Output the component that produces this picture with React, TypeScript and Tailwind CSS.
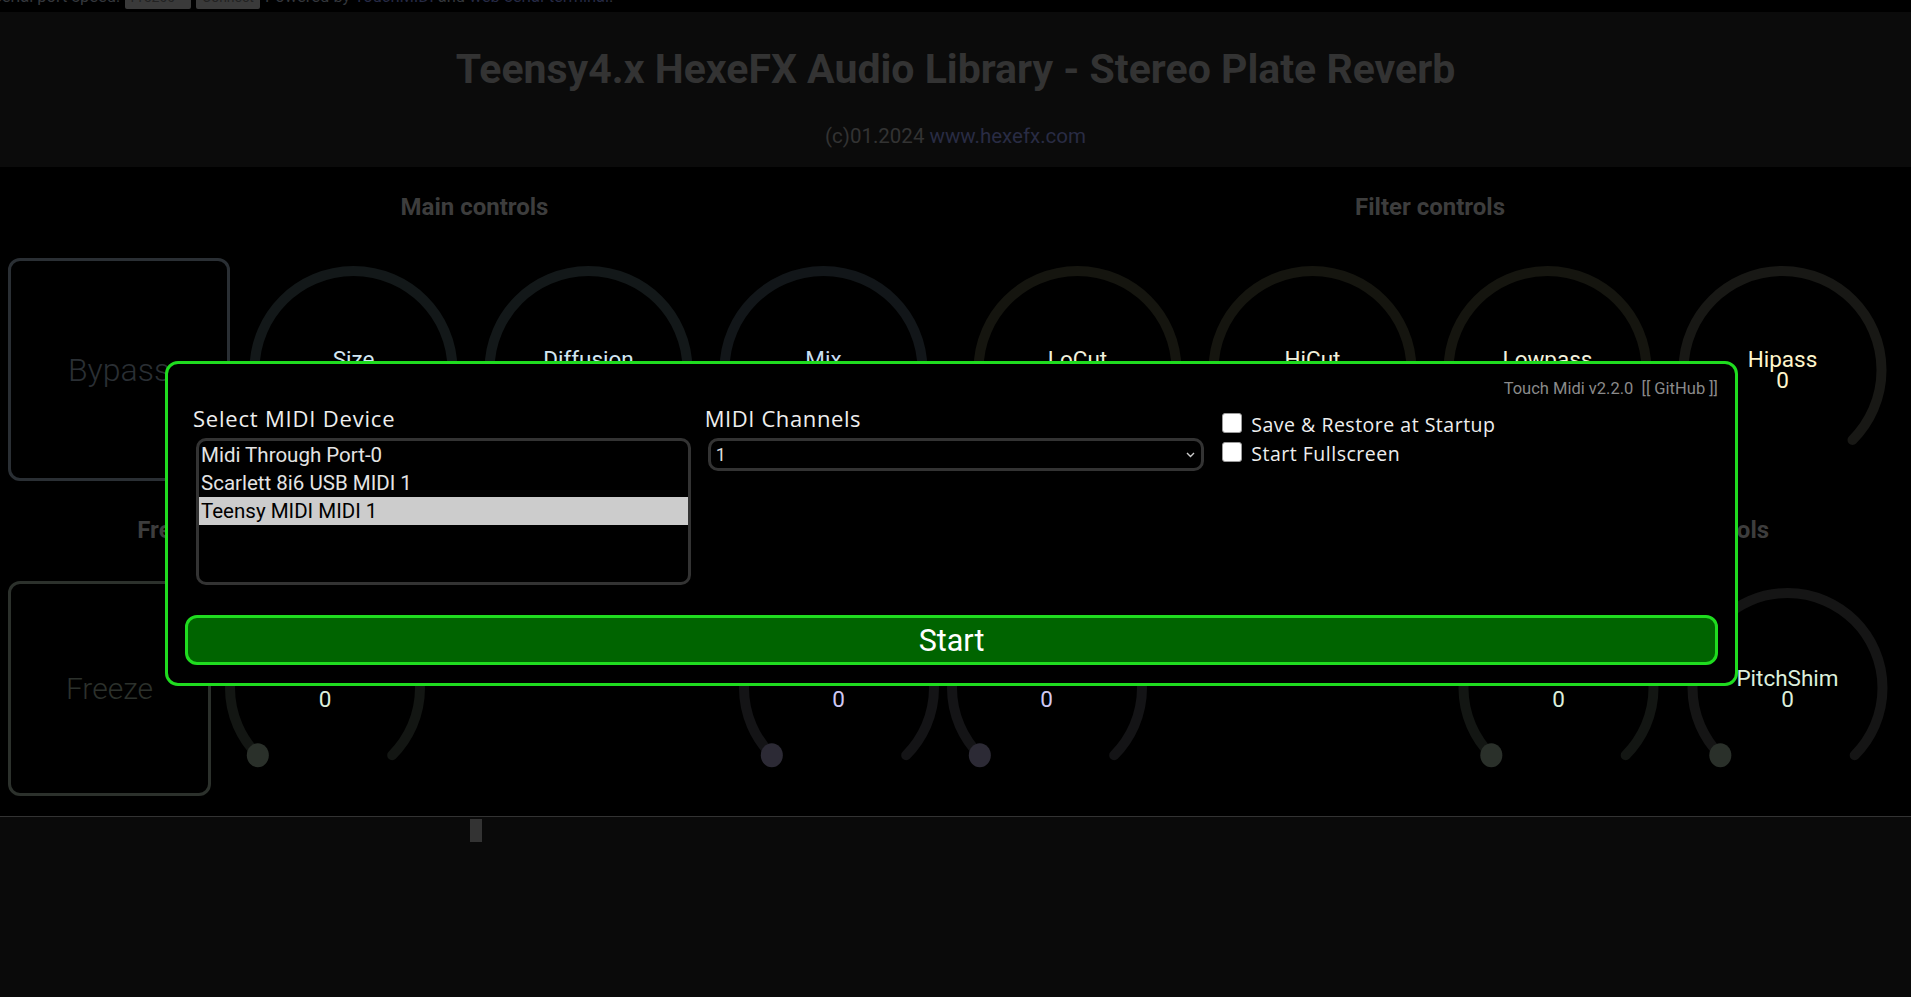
import React from "react";

interface KnobProps {
  label: string;
  w: number;
  h: number;
  r: number;
  cy: number;
  arc: string;
  dot: string;
  text: string;
}

function Knob({ label, w, h, r, cy, arc, dot, text }: KnobProps) {
  const cx = w / 2;
  const d = r * Math.SQRT1_2;
  const path = `M ${cx - d} ${cy + d} A ${r} ${r} 0 1 1 ${cx + d} ${cy + d}`;
  return (
    <div className="relative shrink-0" style={{ width: w, height: h }}>
      <svg width={w} height={h} viewBox={`0 0 ${w} ${h}`}>
        <path d={path} fill="none" stroke={arc} strokeWidth={10} strokeLinecap="round" />
        <ellipse cx={cx - d} cy={cy + d} rx={11} ry={12} fill={dot} />
      </svg>
      <div
        className="absolute inset-0 flex flex-col items-center justify-center text-[22.5px] leading-[21px]"
        style={{ color: text }}
      >
        <span>{label}</span>
        <span>0</span>
      </div>
    </div>
  );
}

function Heading({ children }: { children: React.ReactNode }) {
  return (
    <div className="h-[26px] text-[24px] font-bold leading-[26px] text-[#3d3d3d] whitespace-nowrap">
      {children}
    </div>
  );
}

const mainKnobs = [
  { label: "Size", arc: "#131819", dot: "#262c30", text: "#d2e6f2" },
  { label: "Diffusion", arc: "#131819", dot: "#262c30", text: "#d2e6f2" },
  { label: "Mix", arc: "#121619", dot: "#262c30", text: "#c8ddf2" },
];

const filterKnobs = [
  { label: "LoCut", arc: "#15150f", dot: "#2c2c24", text: "#f2f0dc" },
  { label: "HiCut", arc: "#15150f", dot: "#2c2c24", text: "#f2f0dc" },
  { label: "Lowpass", arc: "#15150f", dot: "#2c2c24", text: "#f2f0dc" },
  { label: "Hipass", arc: "#181815", dot: "#2c2c24", text: "#fff6cc" },
];

function Modal() {
  return (
    <div className="absolute left-[165px] top-[361px] z-10 w-[1573px] rounded-[13px] border-[3px] border-[#1fdc1f] bg-black px-[17px] pb-[18px] pt-[15px] font-['Roboto',sans-serif]">
      <div className="whitespace-pre text-right text-[16.5px] leading-[20px] text-[#8a8a8a]">
        Touch Midi v2.2.0  [[ GitHub ]]
      </div>

      <div className="mt-[6px] grid grid-cols-3 gap-x-[16px] pl-[8px]">
        {/* device list */}
        <div>
          <div className="font-['Open_Sans',sans-serif] text-[22px] leading-[26px] tracking-[0.8px] text-[#eeeeee]">
            Select MIDI Device
          </div>
          <div className="ml-[3px] mt-[7px] h-[147px] rounded-[10px] border-[3px] border-[#333333] text-[20.5px] leading-[28px] text-[#e4e4e4]">
            <div className="px-[2px]">Midi Through Port-0</div>
            <div className="px-[2px]">Scarlett 8i6 USB MIDI 1</div>
            <div className="bg-[#cccccc] px-[2px] text-black">Teensy MIDI MIDI 1</div>
          </div>
        </div>

        {/* channels */}
        <div>
          <div className="-ml-[2px] font-['Open_Sans',sans-serif] text-[22px] leading-[26px] tracking-[0.6px] text-[#eeeeee]">
            MIDI Channels
          </div>
          <div className="ml-[1px] mt-[7px] flex h-[33px] items-center justify-between rounded-[10px] border-[3px] border-[#333333] pl-[5px] pr-[6px] text-[18px] text-[#dddddd]">
            <span>1</span>
            <svg width="9" height="6" viewBox="0 0 9 6">
              <path d="M1 1 L4.5 4.5 L8 1" fill="none" stroke="#cccccc" strokeWidth="1.4" />
            </svg>
          </div>
        </div>

        {/* options */}
        <div className="pl-[2px] pt-[5px] font-['Open_Sans',sans-serif]">
          <label className="flex h-[29px] items-center gap-[9px] text-[19.5px] tracking-[0.5px] text-[#eeeeee]">
            <span className="-mt-[4px] h-[20px] w-[20px] rounded-[3px] border border-[#9a9a9a] bg-white" />
            Save &amp; Restore at Startup
          </label>
          <label className="flex h-[29px] items-center gap-[9px] text-[19.5px] tracking-[0.5px] text-[#eeeeee]">
            <span className="-mt-[4px] h-[20px] w-[20px] rounded-[3px] border border-[#9a9a9a] bg-white" />
            Start Fullscreen
          </label>
        </div>
      </div>

      <button className="mt-[30px] flex h-[50px] w-full items-center justify-center rounded-[12px] border-[3px] border-[#1fdc1f] bg-[#006400] pt-[2px] text-[30.5px] text-white">
        Start
      </button>
    </div>
  );
}

export default function App() {
  return (
    <div className="relative h-[997px] w-[1911px] overflow-hidden bg-black font-['Roboto',sans-serif]">
      {/* serial bar (scrolled partly out of view) */}
      <div className="-ml-[8px] -mt-[17px] flex h-[29px] items-center gap-[5px] whitespace-nowrap bg-black text-[16.5px] text-[#34373c]">
        <span>Serial port speed:</span>
        <span className="flex h-[22px] w-[66px] items-center justify-between rounded-[2px] bg-[#3a3a3a] px-[3px] text-[14px] text-[#222]">
          115200
          <svg width="8" height="5" viewBox="0 0 8 5">
            <path d="M1 1 L4 4 L7 1" fill="none" stroke="#222" strokeWidth="1.5" />
          </svg>
        </span>
        <span className="flex h-[22px] w-[64px] items-center justify-center rounded-[2px] bg-[#3a3a3a] text-[14px] text-[#222]">
          Connect
        </span>
        <span>
          Powered by <span className="text-[#262a45]">TouchMIDI</span> and{" "}
          <span className="text-[#262a45]">web-serial-terminal</span>.
        </span>
      </div>

      {/* header */}
      <div className="flex h-[155px] flex-col items-center bg-[#0b0b0b] pt-[33px]">
        <div className="h-[48px] text-[41px] font-bold leading-[48px] text-[#333333]">
          Teensy4.x HexeFX Audio Library - Stereo Plate Reverb
        </div>
        <div className="mt-[31px] text-[20.5px] leading-[24px] text-[#333333]">
          (c)01.2024 <span className="text-[#292c44]">www.hexefx.com</span>
        </div>
      </div>

      {/* controls */}
      <div className="h-[649px]">
        {/* row 1 */}
        <div className="flex justify-between pl-[8px] pr-[11px] pt-[27px]">
          <div className="flex flex-col items-center">
            <Heading>Main controls</Heading>
            <div className="mt-[38px] flex">
              <div className="mr-[6px] flex h-[223px] w-[222px] items-center justify-center rounded-[12px] border-[3px] border-[#2a2f34] text-[32px] font-light text-[#2a2f34]">
                Bypass
              </div>
              {mainKnobs.map((k) => (
                <Knob key={k.label} {...k} w={235} h={223} r={99} cy={112} />
              ))}
            </div>
          </div>
          <div className="flex flex-col items-center">
            <Heading>Filter controls</Heading>
            <div className="mt-[38px] flex">
              {filterKnobs.map((k) => (
                <Knob key={k.label} {...k} w={235} h={223} r={99} cy={112} />
              ))}
            </div>
          </div>
        </div>

        {/* row 2 */}
        <div className="mt-[36px] flex justify-between pl-[8px] pr-[9px]">
          <div className="flex flex-col items-center">
            <Heading>Freeze controls</Heading>
            <div className="mt-[38px] flex">
              <div className="mr-[6px] flex h-[215px] w-[203px] items-center justify-center rounded-[12px] border-[3px] border-[#2c312c] text-[30px] font-light text-[#2c312c]">
                Freeze
              </div>
              <Knob label="Bloom" w={216} h={215} r={95} cy={107} arc="#131613" dot="#2a302a" text="#dcefdc" />
            </div>
          </div>
          <div className="flex flex-col items-center">
            <Heading>Pitch controls</Heading>
            <div className="ml-[8px] mt-[38px] flex">
              <Knob label="Pitch" w={208} h={215} r={95} cy={107} arc="#141416" dot="#2c2a35" text="#cfc8f4" />
              <Knob label="PitchMix" w={208} h={215} r={95} cy={107} arc="#141416" dot="#2c2a35" text="#cfc8f4" />
            </div>
          </div>
          <div className="flex flex-col items-center">
            <Heading>Shimmer controls</Heading>
            <div className="mt-[38px] flex">
              <Knob label="Shimmer" w={229} h={215} r={95} cy={107} arc="#131613" dot="#2a302a" text="#dcefdc" />
              <Knob label="PitchShim" w={229} h={215} r={95} cy={107} arc="#151515" dot="#2a302a" text="#dcefdc" />
            </div>
          </div>
        </div>
      </div>

      {/* terminal */}
      <div className="h-[181px] border-t border-[#333333] bg-[#0a0a0a] pl-[470px] pt-[2px]">
        <div className="h-[23px] w-[12px] bg-[#333333]" />
      </div>

      <Modal />
    </div>
  );
}
